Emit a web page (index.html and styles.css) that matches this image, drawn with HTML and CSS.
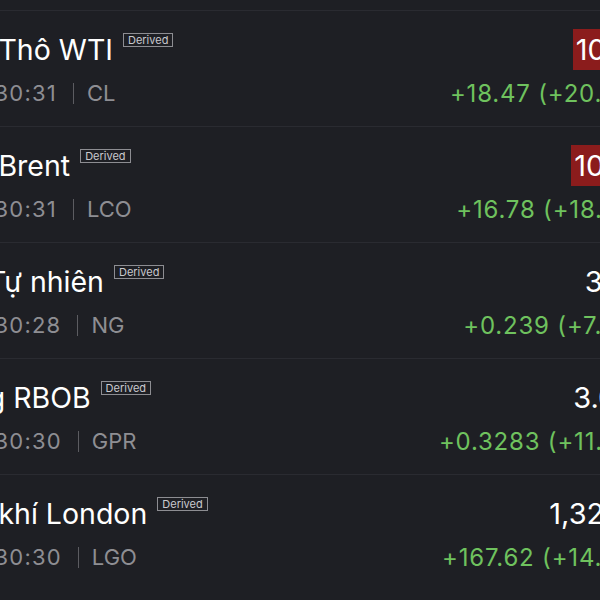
FILE: index.html
```html
<!DOCTYPE html>
<html lang="vi">
<head>
<meta charset="utf-8">
<title>Hàng hóa</title>
<link rel="stylesheet" href="styles.css">
</head>
<body>
<div class="list">
  <div class="row">
    <div class="left">
      <div class="title"><span class="name">Dầu Thô WTI</span><span class="badge">Derived</span></div>
      <div class="sub"><span class="time">16:30:31</span><span class="bar"></span><span class="sym">CL</span></div>
    </div>
    <div class="right">
      <div class="price"><span class="val down">108.97</span></div>
      <div class="chg">+18.47 (+20.48%)</div>
    </div>
  </div>
  <div class="row">
    <div class="left">
      <div class="title"><span class="name">Dầu Brent</span><span class="badge">Derived</span></div>
      <div class="sub"><span class="time">16:30:31</span><span class="bar"></span><span class="sym">LCO</span></div>
    </div>
    <div class="right">
      <div class="price"><span class="val down">108.82</span></div>
      <div class="chg">+16.78 (+18.24%)</div>
    </div>
  </div>
  <div class="row">
    <div class="left">
      <div class="title"><span class="name">Khí Tự nhiên</span><span class="badge">Derived</span></div>
      <div class="sub"><span class="time">16:30:28</span><span class="bar"></span><span class="sym">NG</span></div>
    </div>
    <div class="right">
      <div class="price"><span class="val">3.433</span></div>
      <div class="chg">+0.239 (+7.48%)</div>
    </div>
  </div>
  <div class="row">
    <div class="left">
      <div class="title"><span class="name">Xăng RBOB</span><span class="badge">Derived</span></div>
      <div class="sub"><span class="time">16:30:30</span><span class="bar"></span><span class="sym">GPR</span></div>
    </div>
    <div class="right">
      <div class="price"><span class="val">3.0441</span></div>
      <div class="chg">+0.3283 (+11.98%)</div>
    </div>
  </div>
  <div class="row">
    <div class="left">
      <div class="title"><span class="name">Dầu khí London</span><span class="badge">Derived</span></div>
      <div class="sub"><span class="time">16:30:30</span><span class="bar"></span><span class="sym">LGO</span></div>
    </div>
    <div class="right">
      <div class="price"><span class="val">1,325.50</span></div>
      <div class="chg">+167.62 (+14.48%)</div>
    </div>
  </div>
</div>
</body>
</html>
```

FILE: styles.css
```css
html, body {
  margin: 0;
  padding: 0;
  background: #1e1f24;
  overflow: hidden;
  width: 600px;
  height: 600px;
}

.list {
  margin-left: -63px;
  margin-top: 10px;
  width: 731px;
  font-family: Inter, "Noto Sans", "Liberation Sans", sans-serif;
}

.row {
  display: flex;
  justify-content: space-between;
  height: 115px;
  border-top: 1px solid #2a2b31;
}

.left {
  display: flex;
  flex-direction: column;
  padding-top: 22px;
}

.title {
  display: flex;
  align-items: flex-start;
  color: #ffffff;
  font-size: 28.5px;
  line-height: 34px;
}

.badge {
  margin-left: 10px;
  border: 1px solid #8d8d92;
  color: #c9c9ce;
  font-size: 11px;
  line-height: 12px;
  padding: 0 4px;
}

.sub {
  display: flex;
  align-items: center;
  margin-top: 12px;
  padding-left: 25px;
  color: #8e8e93;
  font-size: 22px;
  line-height: 28px;
}

.time {
  letter-spacing: 1.2px;
}

.bar {
  width: 1px;
  height: 21px;
  background: #5c5c61;
  margin: 0 13px 0 16px;
}

.right {
  display: flex;
  flex-direction: column;
  align-items: flex-end;
  padding-top: 18px;
}

.price {
  color: #ffffff;
  font-size: 29px;
  line-height: 34px;
}

.val {
  display: inline-block;
  padding: 4px 3px 3px;
}

.val.down {
  background: #8b1c1c;
}

.chg {
  margin-top: 10px;
  color: #6fc25e;
  font-size: 24px;
  letter-spacing: 0.8px;
  line-height: 28px;
}
```
